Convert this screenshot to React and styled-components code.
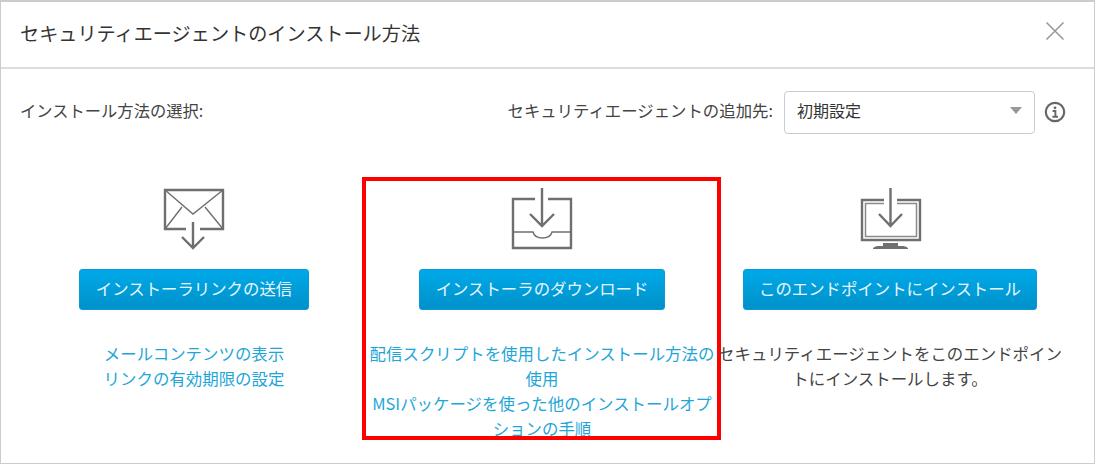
import React from 'react';
import styled, { createGlobalStyle } from 'styled-components';

const GlobalStyle = createGlobalStyle`
  html, body {
    margin: 0;
    background: #ffffff;
  }
  body {
    font-family: "Noto Sans CJK JP", "Liberation Sans", sans-serif;
  }
`;

const Modal = styled.div`
  box-sizing: border-box;
  width: 1095px;
  height: 464px;
  border: 1px solid #cccccc;
  border-top-width: 2px;
  overflow: hidden;
  color: #333333;
`;

const Header = styled.header`
  box-sizing: border-box;
  height: 67px;
  display: flex;
  align-items: center;
  justify-content: space-between;
  padding: 0 29px 8px 19px;
  border-bottom: 2px solid #dddddd;
`;

const Title = styled.h1`
  margin: 0 0 -4px;
  font-size: 19.15px;
  font-weight: 400;
  color: #333333;
`;

const CloseIcon = styled.svg`
  width: 20px;
  height: 20px;
  display: block;
`;

const Toolbar = styled.div`
  display: flex;
  align-items: center;
  justify-content: space-between;
  padding: 22px 28px 0 19px;
`;

const Label = styled.span`
  padding-bottom: 6px;
  font-size: ${props => props.size || 16.3}px;
  color: #444444;
`;

const TargetGroup = styled.div`
  display: flex;
  align-items: center;
`;

const SelectBox = styled.div`
  box-sizing: border-box;
  width: 251px;
  height: 43px;
  margin: 0 9px 0 11px;
  padding: 0 12px 5px;
  display: flex;
  align-items: center;
  justify-content: space-between;
  border: 1px solid #cccccc;
  border-radius: 4px;
  font-size: 16px;
  color: #333333;
`;

const Caret = styled.span`
  width: 0;
  height: 0;
  border-left: 6px solid transparent;
  border-right: 6px solid transparent;
  border-top: 7px solid #999999;
`;

const InfoIcon = styled.svg`
  width: 22px;
  height: 22px;
  margin-bottom: 2px;
  display: block;
`;

const Columns = styled.div`
  display: grid;
  grid-template-columns: repeat(3, 348px);
  padding: 36px 0 0 19px;
`;

const Column = styled.section`
  position: relative;
  display: flex;
  flex-direction: column;
  align-items: center;
  text-align: center;
`;

const IconSlot = styled.div`
  height: 84px;
  display: flex;
  align-items: flex-end;
  justify-content: center;
`;

const ActionIcon = styled.svg`
  width: 70px;
  height: 70px;
  display: block;
  fill: none;
  stroke: #6f6f6f;
  stroke-width: 2.4;
`;

const ActionButton = styled.button`
  box-sizing: border-box;
  height: 41px;
  margin-top: 15px;
  padding: 0 15.5px 3px;
  border: 1px solid #0a9ad3;
  border-radius: 3px;
  background: linear-gradient(#00a9e8, #0091ca);
  color: #e8f6fc;
  font-family: inherit;
  font-size: 16.4px;
  white-space: nowrap;
`;

const Description = styled.div`
  margin-top: 31px;
  font-size: 16.45px;
  line-height: 25px;
  width: 348px;
  color: #444444;
`;

const HelpLink = styled.a`
  display: block;
  color: #1ea6d8;
  text-decoration: none;
`;

const Highlight = styled.div`
  position: absolute;
  top: 7px;
  left: -6px;
  right: -5px;
  height: 263px;
  box-sizing: border-box;
  border: 4px solid #ff0000;
  pointer-events: none;
`;

const MailIcon = () => (
  <ActionIcon viewBox="0 0 70 70">
    <path d="M27 45H6V6H64V45H41" />
    <path d="M6 6L34 30L64 6M6 45L23 23M64 45L46 23" strokeWidth="1.4" />
    <path d="M34 38V64M23 53L34 64L45 53" />
  </ActionIcon>
);

const TrayIcon = () => (
  <ActionIcon viewBox="0 0 70 70">
    <path d="M28 15H6V64H64V15H41" />
    <path d="M6 48H26C28 56 43 56 45 48H64" strokeWidth="1.4" />
    <path d="M35 4V42M23 30L35 42L47 30" />
  </ActionIcon>
);

const MonitorIcon = () => (
  <ActionIcon viewBox="0 0 70 70">
    <path d="M29 16H7V56H65V16H42" />
    <path d="M29 19.5H10.5V52.5H61.5V19.5H42" strokeWidth="1.5" stroke="#8a8a8a" />
    <path d="M35.5 4V42M24 30L35.5 42L47 30" />
    <path d="M28 59H43V62H28Z" fill="#6f6f6f" stroke="none" />
    <path d="M18 65C18 63 21 62 24 62H47C50 62 53 63 53 65Z" fill="#6f6f6f" stroke="none" />
  </ActionIcon>
);

const App = () => (
  <Modal>
    <GlobalStyle />
    <Header>
      <Title>セキュリティエージェントのインストール方法</Title>
      <CloseIcon viewBox="0 0 20 20" fill="none" stroke="#999999" strokeWidth="1.6">
        <path d="M1.5 1.5L18.5 18.5M18.5 1.5L1.5 18.5" />
      </CloseIcon>
    </Header>
    <Toolbar>
      <Label>インストール方法の選択:</Label>
      <TargetGroup>
        <Label size={16.4}>セキュリティエージェントの追加先:</Label>
        <SelectBox>
          初期設定
          <Caret />
        </SelectBox>
        <InfoIcon viewBox="0 0 22 22" fill="none" stroke="#666666">
          <circle cx="11" cy="11" r="9.2" strokeWidth="2.2" />
          <circle cx="11" cy="6.8" r="1.4" fill="#666666" stroke="none" />
          <path d="M8.6 10H11.4V15.6M8.4 15.8H14" strokeWidth="1.9" />
        </InfoIcon>
      </TargetGroup>
    </Toolbar>
    <Columns>
      <Column>
        <IconSlot>
          <MailIcon />
        </IconSlot>
        <ActionButton>インストーラリンクの送信</ActionButton>
        <Description>
          <HelpLink>メールコンテンツの表示</HelpLink>
          <HelpLink>リンクの有効期限の設定</HelpLink>
        </Description>
      </Column>
      <Column>
        <IconSlot>
          <TrayIcon />
        </IconSlot>
        <ActionButton>インストーラのダウンロード</ActionButton>
        <Description>
          <HelpLink>配信スクリプトを使用したインストール方法の使用</HelpLink>
          <HelpLink>MSIパッケージを使った他のインストールオプションの手順</HelpLink>
        </Description>
        <Highlight />
      </Column>
      <Column>
        <IconSlot>
          <MonitorIcon />
        </IconSlot>
        <ActionButton>このエンドポイントにインストール</ActionButton>
        <Description>セキュリティエージェントをこのエンドポイントにインストールします。</Description>
      </Column>
    </Columns>
  </Modal>
);

export default App;
